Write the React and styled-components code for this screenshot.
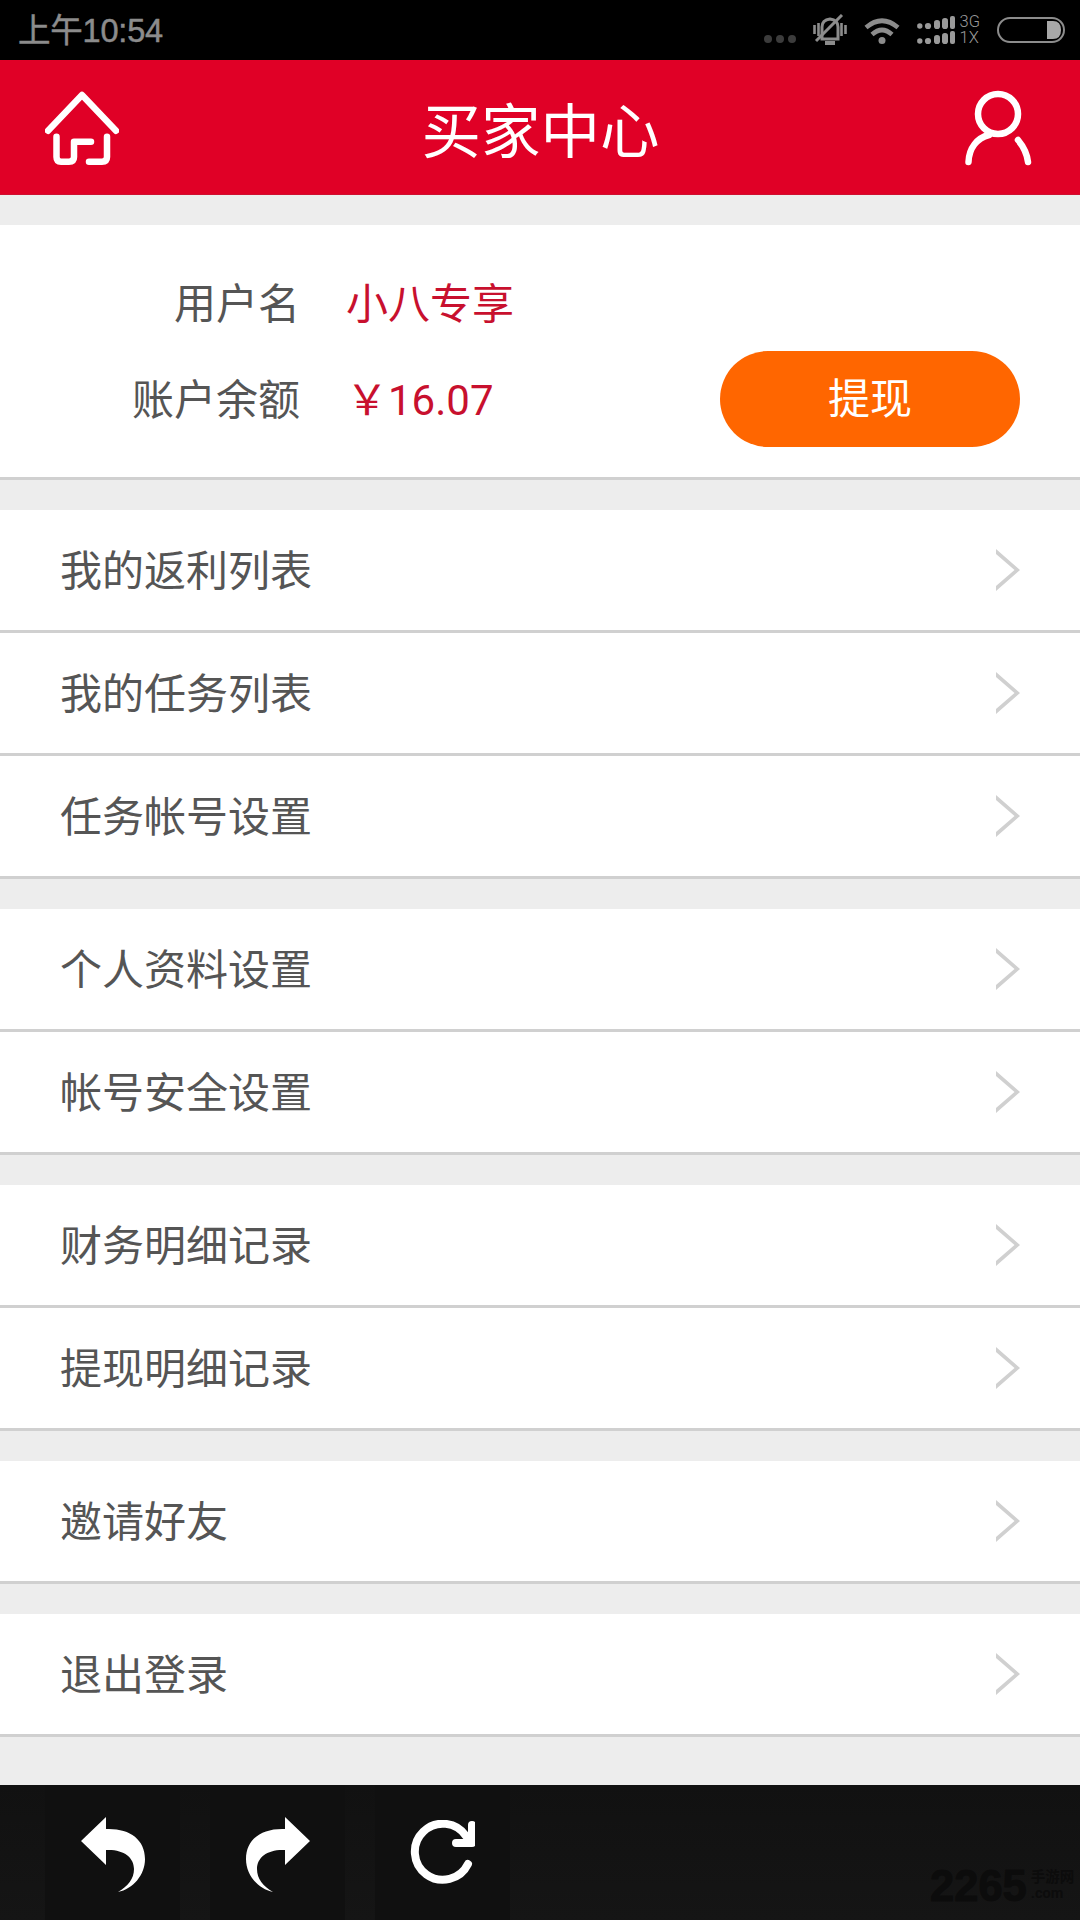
import React from 'react';
import styled, { createGlobalStyle } from 'styled-components';

const Global = createGlobalStyle`
  html, body { margin: 0; padding: 0; background: #ededed; }
  * { box-sizing: border-box; }
  body { font-family: Roboto, "Noto Sans CJK SC", "Liberation Sans", sans-serif; }
`;

const Page = styled.div`
  width: 1080px;
  height: 1920px;
  display: flex;
  flex-direction: column;
  background: #ededed;
  overflow: hidden;
`;

const StatusBar = styled.div`
  height: 60px;
  flex: none;
  background: #000;
  display: flex;
  align-items: center;
  justify-content: space-between;
  padding: 0 15px 0 18px;
`;

const Clock = styled.span`
  font-family: "Liberation Sans", "Noto Sans CJK SC", sans-serif;
  font-size: 32.5px;
  letter-spacing: -0.2px;
  color: #8c8c8c;
  -webkit-text-stroke: 0.5px #8c8c8c;
  margin-bottom: 6px;
`;

const StatusIcons = styled.div`
  display: flex;
  align-items: center;
  gap: 17px;
`;

const SignalGroup = styled.div`
  display: flex;
  align-items: center;
  gap: 5px;
`;

const NetLabel = styled.div`
  font-family: Roboto, "Liberation Sans", sans-serif;
  font-weight: 300;
  font-size: 16.5px;
  line-height: 16px;
  color: #9a9a9a;
`;

const Header = styled.header`
  height: 135px;
  flex: none;
  background: #e00026;
  display: flex;
  align-items: center;
  justify-content: space-between;
  padding: 2px 47px 0 45px;
  border-bottom: 1px solid #cf1030;
`;

const Title = styled.h1`
  margin: 0 3px 2px 0;
  font-size: 59.5px;
  font-weight: 400;
  color: #fff;
`;

const Content = styled.main`
  flex: 1;
  display: flex;
  flex-direction: column;
  gap: 30px;
  padding-top: 30px;
`;

const AccountCard = styled.section`
  background: #fff;
  border-bottom: 3px solid #d0d0d0;
  padding: 30px 60px 30px 0;
  display: grid;
  grid-template-columns: 300px 46px 1fr auto;
  grid-auto-rows: 96px;
  align-items: center;
`;

const Label = styled.span`
  grid-column: 1;
  text-align: right;
  font-size: 42px;
  color: #555;
  margin-bottom: 6px;
`;

const Value = styled.span`
  grid-column: 3;
  font-size: 42px;
  color: #c8102e;
  margin-bottom: 6px;
`;

const WithdrawButton = styled.button`
  grid-column: 4;
  width: 300px;
  height: 96px;
  border: 0;
  border-radius: 48px;
  background: #ff6600;
  color: #fff;
  font-family: inherit;
  font-size: 42px;
  padding: 0 0 7px;
`;

const Group = styled.section`
  display: flex;
  flex-direction: column;
  background: #fff;
`;

const Row = styled.div`
  height: 123px;
  border-bottom: 3px solid #d0d0d0;
  display: flex;
  align-items: center;
  justify-content: space-between;
  padding: 0 60px;
`;

const RowText = styled.span`
  font-size: 42px;
  color: #555;
  margin-bottom: 5px;
`;

const BottomBar = styled.footer`
  height: 135px;
  flex: none;
  background: linear-gradient(#111, #151515);
  display: flex;
  gap: 30px;
  padding-left: 45px;
  position: relative;
`;

const ToolButton = styled.div`
  width: 135px;
  background: #101010;
  display: flex;
  align-items: center;
  justify-content: center;
  padding-top: ${p => p.$top || 0}px;
`;

const Watermark = styled.div`
  position: absolute;
  left: 930px;
  top: 85px;
  display: flex;
  gap: 4px;
  color: #0c0c0c;
  white-space: nowrap;
`;

const WatermarkNum = styled.span`
  font-family: "Liberation Sans", sans-serif;
  font-weight: 700;
  font-size: 43.5px;
  line-height: 33px;
  -webkit-text-stroke: 1px #0c0c0c;
`;

const WatermarkSide = styled.div`
  font-size: 14.5px;
  line-height: 16px;
  font-weight: 700;
`;

const HomeIcon = () => (
  <svg width="74" height="74" viewBox="0 0 74 74" fill="none" stroke="#fff" strokeWidth="6.5" strokeLinecap="round" strokeLinejoin="round">
    <path d="M3 39.7 L37 4 L71 39.7" />
    <path d="M11.5 45.7 V66 Q11.5 70.7 16 70.7 H24 Q29 70.7 29 66 V50.7 H46" />
    <path d="M62 45.7 V66 Q62 70.7 57 70.7 H44" />
  </svg>
);

const UserIcon = () => (
  <svg width="68" height="76" viewBox="0 0 68 76" fill="none" stroke="#fff" strokeWidth="6.5" strokeLinecap="round">
    <circle cx="33" cy="24" r="20" />
    <path d="M3.5 72 C4 58 12 48 24 45" />
    <path d="M53 50 C58 56 62 63 63 72" />
  </svg>
);

const Chevron = () => (
  <svg width="24" height="42" viewBox="0 0 24 42">
    <polygon points="0,0 24,21 0,42 0,37 18.5,21 0,5" fill="#d0d0d0" />
  </svg>
);

const DotsIcon = () => (
  <svg width="32" height="8" viewBox="0 0 32 8" fill="#3c3c3c" style={{ marginTop: 18 }}>
    <circle cx="4" cy="4" r="4" /><circle cx="16" cy="4" r="4" /><circle cx="28" cy="4" r="4" />
  </svg>
);

const BellIcon = () => (
  <svg width="34" height="32" viewBox="0 0 34 32" fill="none" stroke="#8c8c8c" strokeWidth="3">
    <path d="M9 25 V13 Q9 6 17 5 Q25 6 25 13 V25 Z" />
    <path d="M1.5 11 V20 M5.5 9 V22 M28.5 9 V22 M32.5 11 V20" strokeWidth="2.6" />
    <path d="M12 29 H22" strokeWidth="4" />
    <path d="M3 27 L29 1" strokeWidth="3" />
  </svg>
);

const WifiIcon = () => (
  <svg width="36" height="27" viewBox="0 0 36 27" fill="none" stroke="#8c8c8c" strokeWidth="4.6">
    <path d="M2 10.5 Q18 -3 34 10.5" />
    <path d="M8 17.5 Q18 8.5 28 17.5" />
    <circle cx="18" cy="23.5" r="3.5" fill="#8c8c8c" stroke="none" />
  </svg>
);

const SignalIcon = () => (
  <svg width="38" height="29" viewBox="0 0 38 29" fill="#9a9a9a">
    {[0, 15].map(y => (
      <g key={y}>
        <circle cx="2.8" cy={y + 10} r="2.7" />
        <circle cx="11" cy={y + 10} r="3.1" />
        <rect x="17" y={y + 4} width="6" height="9" rx="2.8" />
        <rect x="25" y={y + 2} width="6" height="11" rx="2.8" />
        <rect x="33" y={y} width="5" height="13" rx="2" />
      </g>
    ))}
  </svg>
);

const BatteryIcon = () => (
  <svg width="68" height="26" viewBox="0 0 68 26">
    <rect x="1" y="1" width="66" height="24" rx="12" fill="none" stroke="#8c8c8c" strokeWidth="2" />
    <path d="M50 4 H56 Q64 4 64 13 Q64 22 56 22 H50 Z" fill="#a8a8a8" />
  </svg>
);

const UndoShape = 'M0 24 L25 0 V12 C48 11 64 22 64 42 C64 58 52 72 37 75 C47 69 53 62 53 52 C53 40 42 32 25 33 V48 Z';

const UndoIcon = () => (
  <svg width="64" height="76" viewBox="0 0 64 76" fill="#fff"><path d={UndoShape} /></svg>
);

const RedoIcon = () => (
  <svg width="64" height="76" viewBox="0 0 64 76" fill="#fff"><path d={UndoShape} transform="matrix(-1 0 0 1 64 0)" /></svg>
);

const ReloadIcon = () => (
  <svg width="65" height="65" viewBox="0 0 65 65" fill="none" stroke="#fff" strokeWidth="8" strokeLinecap="round" strokeLinejoin="round">
    <path d="M58 44 A28 28 0 1 1 56 16" />
    <path d="M62 5 V23 H46" />
  </svg>
);

const groups = [
  ['我的返利列表', '我的任务列表', '任务帐号设置'],
  ['个人资料设置', '帐号安全设置'],
  ['财务明细记录', '提现明细记录'],
  ['邀请好友'],
  ['退出登录'],
];

export default function App() {
  return (
    <Page>
      <Global />
      <StatusBar>
        <Clock>上午10:54</Clock>
        <StatusIcons>
          <DotsIcon />
          <BellIcon />
          <WifiIcon />
          <SignalGroup>
            <SignalIcon />
            <NetLabel>3G<br />1X</NetLabel>
          </SignalGroup>
          <BatteryIcon />
        </StatusIcons>
      </StatusBar>
      <Header>
        <HomeIcon />
        <Title>买家中心</Title>
        <UserIcon />
      </Header>
      <Content>
        <AccountCard>
          <Label>用户名</Label>
          <Value>小八专享</Value>
          <span />
          <Label>账户余额</Label>
          <Value>￥16.07</Value>
          <WithdrawButton>提现</WithdrawButton>
        </AccountCard>
        {groups.map(items => (
          <Group key={items[0]}>
            {items.map(text => (
              <Row key={text}>
                <RowText>{text}</RowText>
                <Chevron />
              </Row>
            ))}
          </Group>
        ))}
      </Content>
      <BottomBar>
        <ToolButton $top={4}><UndoIcon /></ToolButton>
        <ToolButton $top={4}><RedoIcon /></ToolButton>
        <ToolButton><ReloadIcon /></ToolButton>
        <Watermark>
          <WatermarkNum>2265</WatermarkNum>
          <WatermarkSide>手游网<br />.com</WatermarkSide>
        </Watermark>
      </BottomBar>
    </Page>
  );
}
